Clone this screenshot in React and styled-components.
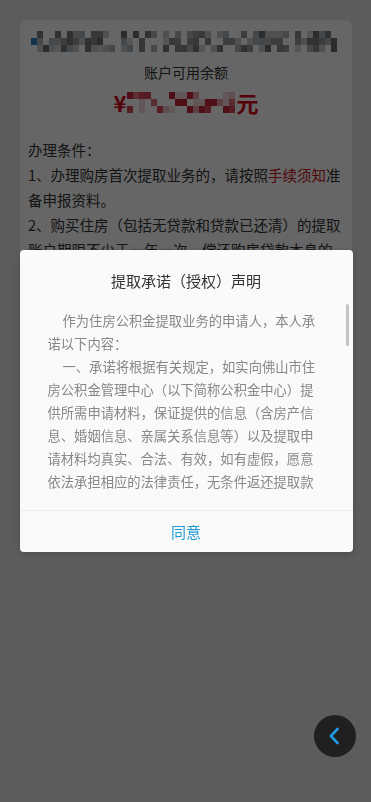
import React from 'react';
import styled, { createGlobalStyle } from 'styled-components';

const GlobalStyle = createGlobalStyle`
  html, body {
    margin: 0;
    padding: 0;
    background: #e6e6e6;
    font-family: "Noto Sans CJK SC", "Noto Sans", sans-serif;
    text-spacing-trim: space-all;
  }
`;

// deterministic noise for the redacted mosaics
const seeded = (seed) => {
  let s = seed;
  return () => {
    s = (s * 9301 + 49297) % 233280;
    return s / 233280;
  };
};

const buildCells = (count, seed, palette) => {
  const rand = seeded(seed);
  return Array.from({ length: count }, () => {
    const r = rand();
    if (r < 0.3) return 'transparent';
    return palette[Math.floor(rand() * palette.length)];
  });
};

const grayCells = buildCells(50 * 3, 7, ['#9a9a9a', '#8a8a8a', '#b5b5b5', '#c8c8c8', '#7c7c7c', '#a9b4bd', '#d6d6d6', '#6f6f6f']);
const redCells = buildCells(18 * 3, 19, ['#e8a0a8', '#d84a5a', '#f2c4c8', '#c8263a', '#e27080', '#f5dadd']);

const terms = [
  '作为住房公积金提取业务的申请人，本人承诺以下内容：',
  '一、承诺将根据有关规定，如实向佛山市住房公积金管理中心（以下简称公积金中心）提供所需申请材料，保证提供的信息（含房产信息、婚姻信息、亲属关系信息等）以及提取申请材料均真实、合法、有效，如有虚假，愿意依法承担相应的法律责任，无条件返还提取款项，并同意公积金中心将相关失信行为记入个人信用档案。',
  '二、本人授权公积金中心向不动产登记、民政、公安、银行、税务、社保等相关部门和机构查询、核实本人及配偶、未成年子女的房产、婚姻、户籍、贷款、纳税等信息，查询结果仅用于本次提取业务的审核。',
  '三、本人承诺提取的住房公积金仅用于本次申请所述用途，不存在伪造、变造材料或者虚构事实骗提、套取住房公积金的行为。',
  '四、如因本人提供的信息不真实、不完整而造成提取失败或资金损失的，由本人自行承担全部责任。',
  '五、本人已认真阅读并知悉上述内容，自愿作出以上承诺及授权。',
];

const App = () => (
  <>
    <GlobalStyle />
    <Page>
      <Card>
        <MosaicRow>
          <SiteIcon />
          <Mosaic $cols={50}>
            {grayCells.map((c, i) => (
              <Cell key={i} style={{ background: c }} />
            ))}
          </Mosaic>
        </MosaicRow>
        <BalanceLabel>账户可用余额</BalanceLabel>
        <Amount>
          <span>¥</span>
          <Mosaic $cols={18}>
            {redCells.map((c, i) => (
              <Cell key={i} style={{ background: c }} />
            ))}
          </Mosaic>
          <span>元</span>
        </Amount>
        <Conditions>
          <p>办理条件：</p>
          <p>1、办理购房首次提取业务的，请按照<RedLink>手续须知</RedLink>准备申报资料。</p>
          <p>2、购买住房（包括无贷款和贷款已还清）的提取账户期限不少于一年一次，偿还购房贷款本息的提取间隔不少于一个月。</p>
        </Conditions>
      </Card>
    </Page>

    <Overlay>
      <Dialog>
        <DialogTitle>提取承诺（授权）声明</DialogTitle>
        <ScrollArea>
          <DialogBody>
            {terms.map((t, i) => (
              <Term key={i}>{t}</Term>
            ))}
          </DialogBody>
          <ScrollThumb />
        </ScrollArea>
        <DialogFooter>
          <AgreeButton>同意</AgreeButton>
        </DialogFooter>
      </Dialog>
    </Overlay>

    <BackButton aria-label="返回">
      <svg width="12" height="18" viewBox="0 0 12 18" fill="none">
        <path d="M9.5 2 L3 9 L9.5 16" stroke="#1d9be0" strokeWidth="2.6" strokeLinecap="round" strokeLinejoin="round" />
      </svg>
    </BackButton>
  </>
);

const Page = styled.div`
  min-height: 100vh;
  padding: 20px 19px 20px 20px;
  box-sizing: border-box;
`;

const Card = styled.div`
  background: #fff;
  border-radius: 6px;
  padding: 10px 8px 24px;
`;

const MosaicRow = styled.div`
  display: flex;
  align-items: center;
  height: 22px;
  padding-left: 3px;
`;

const SiteIcon = styled.div`
  width: 6px;
  height: 7px;
  background: #2d7fc0;
  flex-shrink: 0;
`;

const Mosaic = styled.div`
  display: grid;
  grid-template-columns: repeat(${(p) => p.$cols}, 6px);
  grid-auto-rows: 7px;
  flex-shrink: 0;
`;

const Cell = styled.div``;

const BalanceLabel = styled.div`
  margin-top: 10px;
  text-align: center;
  font-size: 14px;
  line-height: 20px;
  color: #333;
`;

const Amount = styled.div`
  margin-top: 5px;
  display: flex;
  align-items: center;
  justify-content: center;
  height: 30px;
  font-size: 22px;
  font-weight: bold;
  color: #d8001a;
  gap: 1px;
`;

const Conditions = styled.div`
  margin-top: 20px;
  font-size: 14.5px;
  line-height: 25px;
  color: #333;

  p {
    margin: 0;
  }
`;

const RedLink = styled.span`
  color: #c8101e;
`;

const Overlay = styled.div`
  position: fixed;
  inset: 0;
  background: rgba(0, 0, 0, 0.6);
  display: flex;
  align-items: center;
  justify-content: center;
  z-index: 10;
`;

const Dialog = styled.div`
  width: 333px;
  background: #fafafb;
  border-radius: 4px;
  box-shadow: 0 2px 8px rgba(0, 0, 0, 0.2);
  display: flex;
  flex-direction: column;
  margin-left: 1px;
`;

const DialogTitle = styled.div`
  padding: 20px 0 12px;
  text-align: center;
  font-size: 15px;
  line-height: 22px;
  color: #333;
`;

const ScrollArea = styled.div`
  position: relative;
  height: 193px;
  margin: 0 2px 13px 28px;
  overflow: hidden;
`;

const DialogBody = styled.div`
  width: 269px;
  padding-top: 5px;
`;

const ScrollThumb = styled.div`
  position: absolute;
  top: 0;
  right: 2px;
  width: 3px;
  height: 42px;
  border-radius: 2px;
  background: #c4c4c4;
`;

const Term = styled.p`
  margin: 0;
  font-size: 13.3px;
  line-height: 23px;
  color: #888;
  text-indent: 15px;
`;

const DialogFooter = styled.div`
  border-top: 1px solid #eeeeee;
`;

const AgreeButton = styled.button`
  display: block;
  width: 100%;
  height: 41px;
  border: none;
  background: transparent;
  font-family: inherit;
  font-size: 15px;
  color: #1e9ad6;
  cursor: pointer;
`;

const BackButton = styled.button`
  position: fixed;
  right: 15px;
  bottom: 45px;
  width: 42px;
  height: 42px;
  border-radius: 50%;
  border: none;
  background: #202020;
  display: flex;
  align-items: center;
  justify-content: center;
  padding: 0 2px 0 0;
  z-index: 20;
  cursor: pointer;
`;

export default App;
